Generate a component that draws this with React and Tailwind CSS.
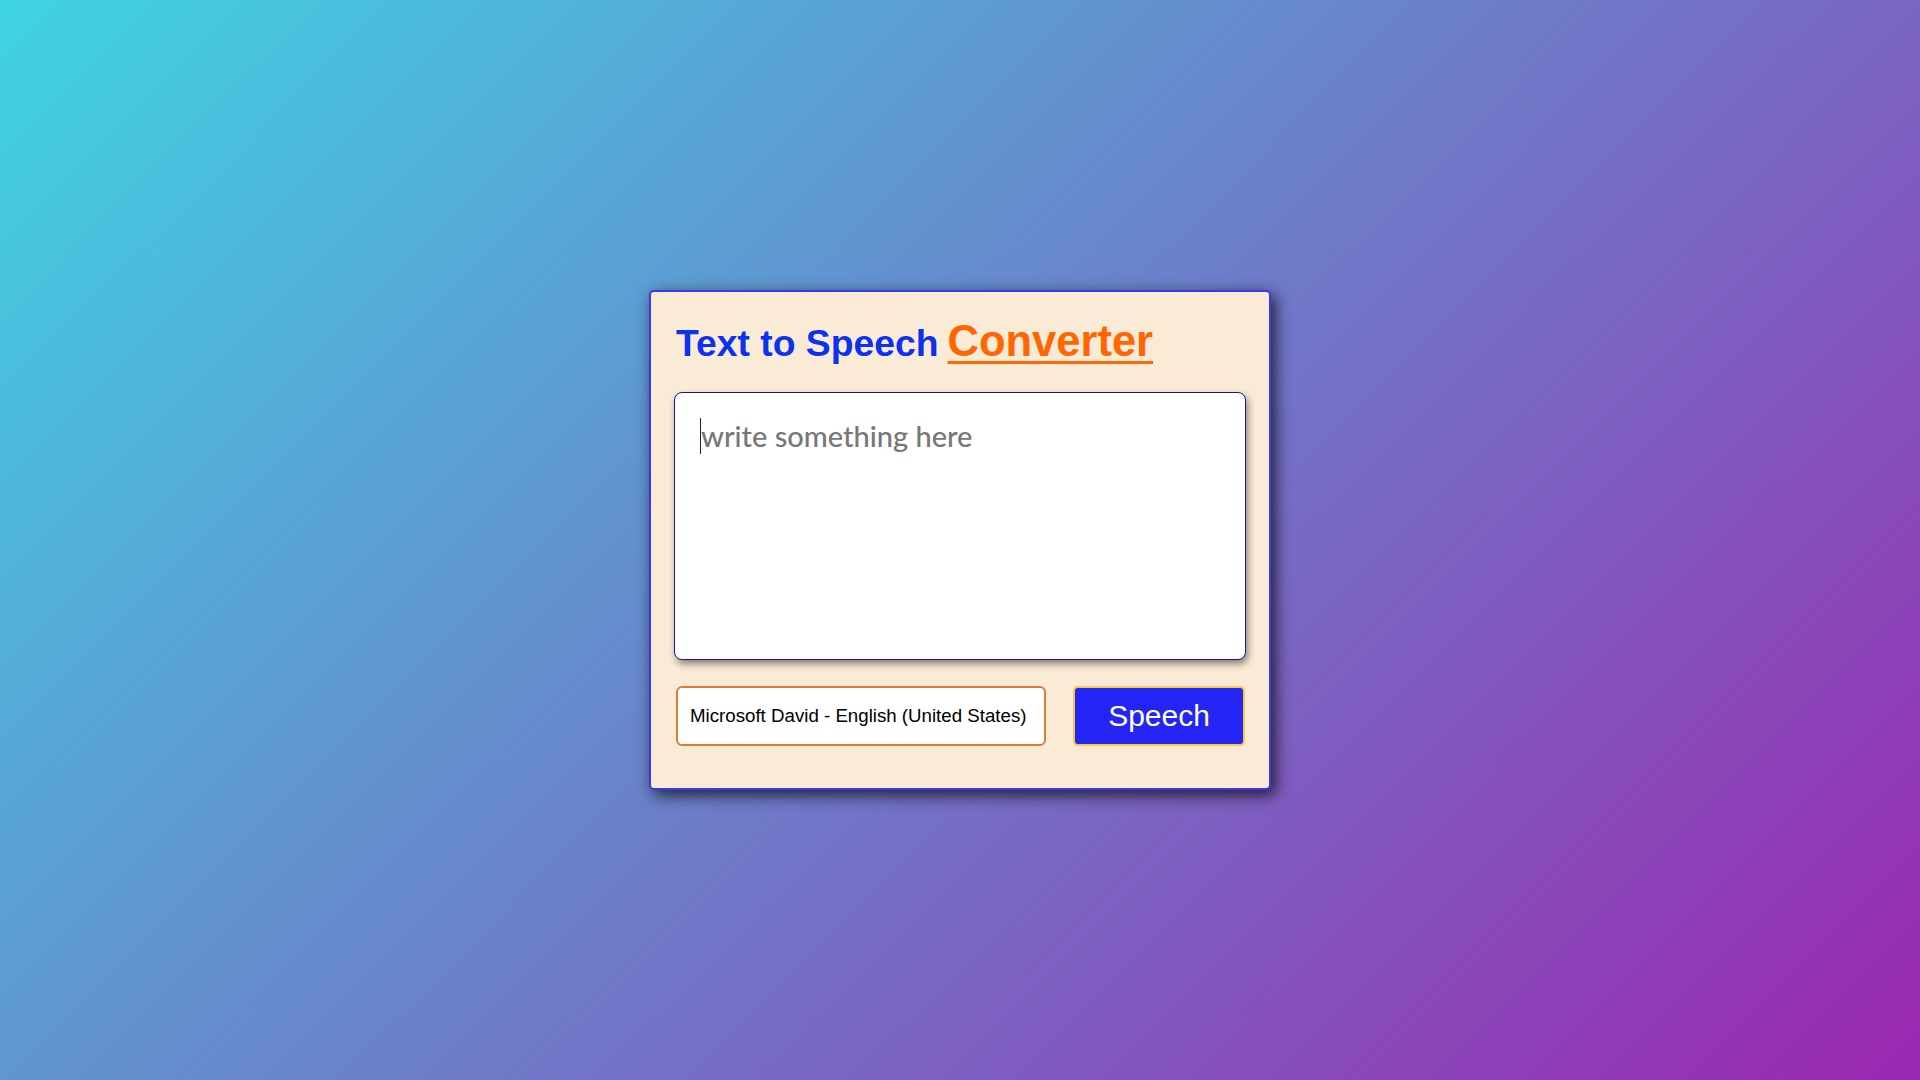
import { useState } from "react";

const VOICES = ["Microsoft David - English (United States)", "Microsoft Zira - English (United States)"];

export default function App() {
  const [text, setText] = useState("");
  const [voice, setVoice] = useState(VOICES[0]);

  return <div className="flex min-h-screen items-center justify-center bg-[linear-gradient(135deg,#3fd4e3,#9b27b0)] font-['Liberation_Sans',Arial,sans-serif]">
      <div className="w-[622px] rounded-[5px] border-2 border-[#3a3ae6] bg-[#faebd7] px-[23px] pt-[28px] pb-[42px] shadow-[4px_5px_16px_rgba(0,0,0,0.75)]">
        <h1 className="ml-[2px] flex items-baseline font-bold">
          <span className="text-[37.3px] leading-none text-[#0b32ee]">Text to Speech</span>
          <span className="ml-[9px] text-[43.5px] leading-none text-[#ff6600] underline decoration-[3px] underline-offset-[5px]">Converter</span>
        </h1>

        <div className="relative mt-[28px]">
          <textarea value={text} onChange={e => setText(e.target.value)} placeholder="write something here" className="block h-[268px] w-full resize-none rounded-lg border border-[#1e10a6] bg-white px-[26px] pt-[25px] pb-[20px] font-['Lato',sans-serif] text-[29px] leading-[36px] font-medium text-gray-800 shadow-[2px_4px_7px_rgba(0,0,0,0.45)] outline-none placeholder:text-[#777777]" />
          {!text && <span className="pointer-events-none absolute left-[26px] top-[26px] h-[36px] w-px bg-[#222]" />}
        </div>

        <div className="mt-[26px] flex items-center justify-between">
          <select value={voice} onChange={e => setVoice(e.target.value)} className="ml-[2px] h-[60px] w-[370px] appearance-none rounded-md border-2 border-[#e07b35] bg-white px-[12px] text-[18.7px] text-black outline-none">
            {VOICES.map(v => <option key={v}>{v}</option>)}
          </select>
          <button className="mr-[1px] h-[60px] w-[172px] rounded-[5px] border-2 border-[#f5c84a] bg-[#2424f5] text-[30px] text-white">
            Speech
          </button>
        </div>
      </div>
    </div>;
}
